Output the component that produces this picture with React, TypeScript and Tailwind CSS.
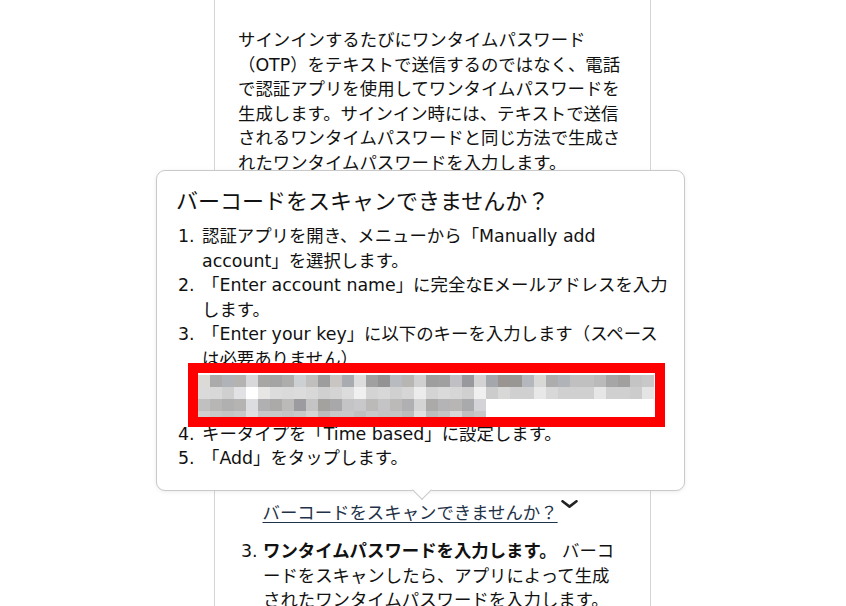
const MOSAIC: string[][] = [
  [
    "#dcdad6", "#ababab", "#b0b4b8", "#b5b3b2", "#d8d8da", "#a8a6a5", "#a4a4a4", "#adadab",
    "#cdd0d2", "#c0bfbd", "#9d9d9d", "#c9c5c2", "#a8acb0", "#dddddd", "#a0a0a0", "#939393",
    "#b8bcc0", "#b8b6b3", "#d0d0d0", "#9e9e9e", "#a0a0a0", "#c0c0c4", "#97999d", "#d3d3d3",
    "#a4a8ac", "#9a9590", "#999794", "#b4b8bc", "#d8d8d6", "#adadad", "#b0b4b8", "#c0c0c0",
    "#c0c0c0", "#bababa", "#a6a6a6", "#a2a09e", "#c4c4c4", "#c8c8c8",
  ],
  [
    "#dadada", "#d8d8d8", "#cfcfcf", "#e2e2e4", "#ffffff", "#e8e6e4", "#dcdcdc", "#dadada",
    "#dcdcdc", "#d8d8d8", "#d0d0d0", "#d4d4d4", "#dcdcdc", "#f0f0f0", "#d4d4d4", "#d8d8d8",
    "#d0d0d0", "#d6d6d6", "#ececec", "#d4d4d4", "#dadada", "#d6d6d6", "#d0d0d0", "#f0f0f0",
    "#cccccc", "#d8d8d6", "#d0d0d0", "#d0d0d0", "#e8e8e8", "#d8d8d8", "#d0d0d0", "#d0d0d0",
    "#d0d0d0", "#e6e6e6", "#d0d0d0", "#d0d0d0", "#cccccc", "#e4e4e4",
  ],
  [
    "#c0c0c0", "#b8b6b4", "#b0b0b0", "#b6b4b2", "#dcdde0", "#b0b0b2", "#acaaa8", "#bcbab8",
    "#9c9ca0", "#c4c4c4", "#a4a29f", "#a8a8aa", "#c4c4c6", "#c8c8ca", "#bcbab8", "#c4c4c6",
    "#bcbab8", "#b0b0b2", "#d4d4d4", "#acaaa8", "#b4b4b6", "#b8b6b4", "#a8aaac", "#d4d4d8",
  ],
  [
    "#d0d0d0", "#c8c8c8", "#c4c4c4", "#c8c8c8", "#e0e0e0", "#c8c8c8", "#c8c8c8", "#c4c4c4",
    "#c8c8c8", "#d4d4d4", "#bcbcbc", "#c8c8c8", "#c8c8c8", "#c0c0c0", "#c8c8c8", "#c4c4c4",
    "#c4c4c4", "#bcbcbc", "#e0e0e0", "#bcbcbc", "#c4c4c4", "#d8d8d8", "#c0c0c0", "#c8c8c8",
  ],
];

// blurred secret key
function KeyMosaic() {
  return (
    <svg width="457" height="44" viewBox="0 0 457 44" className="block">
      {MOSAIC.map((row, r) =>
        row.map((c, i) => (
          <rect
            key={`${r}-${i}`}
            x={i * 12}
            y={2 + r * 12}
            width={12}
            height={r === 3 ? 6 : 12}
            fill={c}
          />
        ))
      )}
    </svg>
  );
}

function Chevron() {
  return (
    <svg width="17" height="8" viewBox="0 0 17 8" className="mt-[-1px] shrink-0">
      <polyline
        points="1.5,1.3 8.5,6.6 15.5,1.3"
        fill="none"
        stroke="#222"
        strokeWidth="2.6"
        strokeLinecap="round"
        strokeLinejoin="round"
      />
    </svg>
  );
}

function ManualPopover() {
  return (
    <div className="absolute left-[-59px] top-[170px] z-10 w-[529px] rounded-[9px] border border-[#c9c9c9] bg-white pt-[17px] pb-[19px] pl-[19px] pr-[14px] shadow-[0_1px_4px_rgba(0,0,0,0.08)]">
      <h2 className="text-[22px] leading-[28px]">バーコードをスキャンできませんか？</h2>
      <ol className="mt-[8px] text-[17.4px] leading-[24.6px]">
        <li className="flex">
          <span className="w-[26px] shrink-0 pl-[2px]">1.</span>
          <span className="flex-1">認証アプリを開き、メニューから「Manually add account」を選択します。</span>
        </li>
        <li className="flex">
          <span className="w-[26px] shrink-0 pl-[2px]">2.</span>
          <span className="flex-1">「Enter account name」に完全なEメールアドレスを入力します。</span>
        </li>
        <li className="flex">
          <span className="w-[26px] shrink-0 pl-[2px]">3.</span>
          <div className="flex-1">
            <p>「Enter your key」に以下のキーを入力します（スペースは必要ありません）</p>
            <div className="relative h-[50px]">
              <div className="absolute left-[-14px] top-[-9px] h-[64px] w-[477px] border-[10px] border-[#ff0000] bg-white">
                <KeyMosaic />
              </div>
            </div>
          </div>
        </li>
        <li className="flex">
          <span className="w-[26px] shrink-0 pl-[2px]">4.</span>
          <span className="flex-1">キータイプを「Time based」に設定します。</span>
        </li>
        <li className="flex">
          <span className="w-[26px] shrink-0 pl-[2px]">5.</span>
          <span className="flex-1">「Add」をタップします。</span>
        </li>
      </ol>
      <div className="absolute bottom-[-7.5px] left-[258px] h-[14px] w-[14px] rotate-45 border-r border-b border-[#c9c9c9] bg-white" />
    </div>
  );
}

export default function App() {
  return (
    <div
      lang="ja"
      className="h-[606px] overflow-hidden bg-white font-['DejaVu_Sans','Noto_Sans_CJK_JP',sans-serif] text-[#111] [line-break:normal]"
    >
      <div className="relative ml-[214px] h-full w-[437px] border-x border-[#d5d5d5] pt-[28px] pl-[23px] pr-[24px] text-[17.4px] leading-[24.6px]">
        <p>
          サインインするたびにワンタイムパスワード（OTP）をテキストで送信するのではなく、電話で認証アプリを使用してワンタイムパスワードを生成します。サインイン時には、テキストで送信されるワンタイムパスワードと同じ方法で生成されたワンタイムパスワードを入力します。
        </p>

        {/* QR code steps, hidden under the popover */}
        <div className="h-[325px]" />

        <div className="flex items-start pl-[24.5px]">
          <a href="#" className="text-[#1f3248] underline decoration-[#1f3248] underline-offset-[3px]">
            バーコードをスキャンできませんか？
          </a>
          <span className="ml-[3px]">
            <Chevron />
          </span>
        </div>

        <div className="mt-[14px] flex">
          <span className="w-[25px] shrink-0 pl-[3px]">3.</span>
          <p className="flex-1">
            <b className="font-bold">ワンタイムパスワードを入力します。</b> バーコードをスキャンしたら、アプリによって生成されたワンタイムパスワードを入力します。
          </p>
        </div>

        <ManualPopover />
      </div>
    </div>
  );
}
